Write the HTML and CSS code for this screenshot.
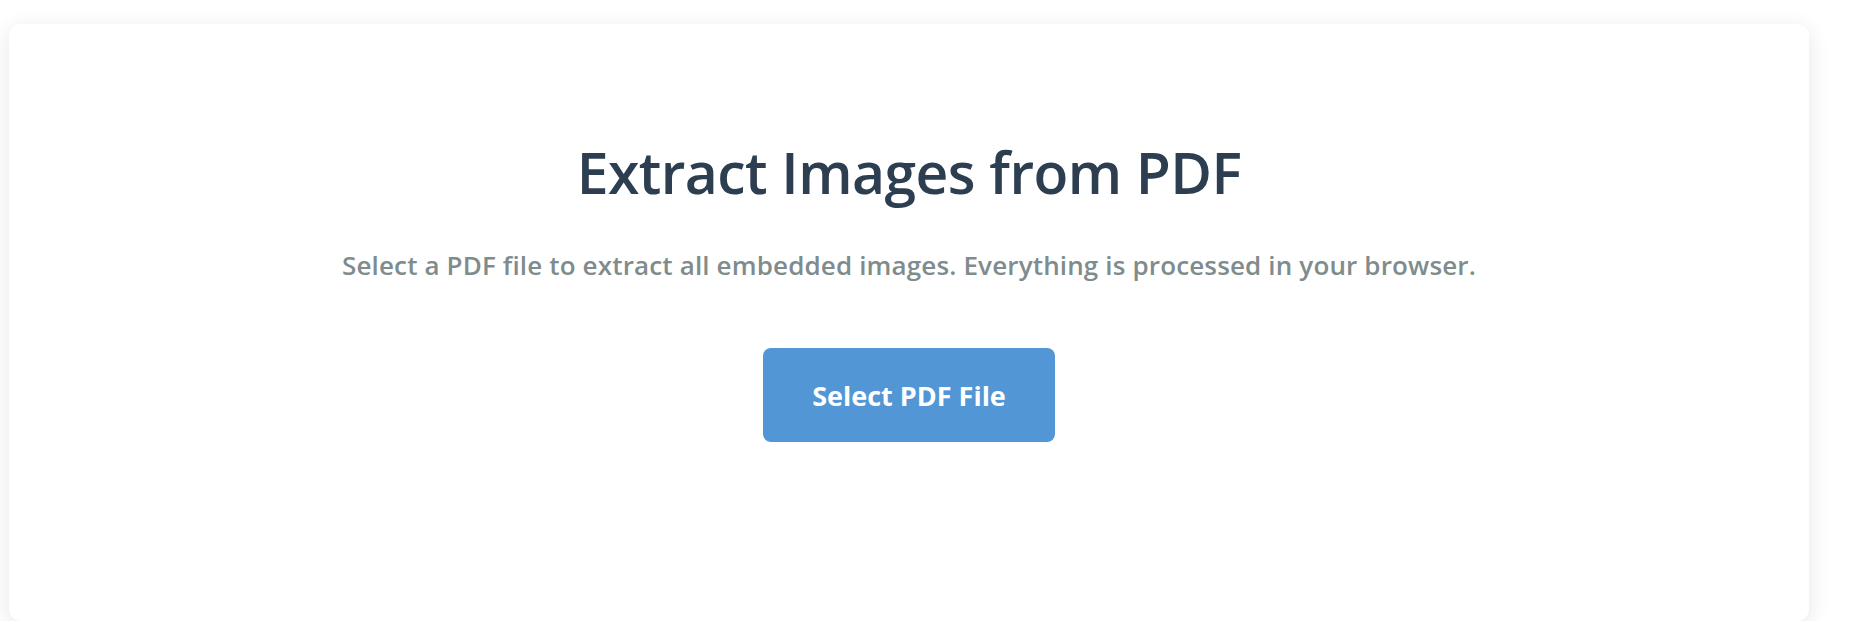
FILE: index.html
```html
<!DOCTYPE html>
<html lang="en">
<head>
<meta charset="utf-8">
<title>Extract Images from PDF</title>
<link rel="stylesheet" href="styles.css">
</head>
<body>
<main class="page">
  <section class="card">
    <h1 class="title">Extract Images from PDF</h1>
    <p class="subtitle">Select a PDF file to extract all embedded images. Everything is processed in your browser.</p>
    <button class="select-btn" type="button">Select PDF File</button>
  </section>
</main>
</body>
</html>
```

FILE: styles.css
```css
html, body {
  margin: 0;
  padding: 0;
  background: #ffffff;
}

body {
  font-family: "Open Sans", "Noto Sans", "Liberation Sans", sans-serif;
}

.page {
  padding: 24px 0 0 9px;
}

.card {
  box-sizing: border-box;
  width: 1800px;
  height: 597px;
  background: #ffffff;
  border-radius: 12px;
  box-shadow: 0 5px 22px rgba(0, 0, 0, 0.1);
  padding: 113px 40px 0;
  display: flex;
  flex-direction: column;
  align-items: center;
  text-align: center;
}

.title {
  margin: 0;
  font-size: 57px;
  line-height: 70px;
  font-weight: 600;
  letter-spacing: -0.55px;
  color: #2c3e50;
}

.subtitle {
  margin: 40px 0 0;
  font-size: 26px;
  line-height: 36px;
  font-weight: 600;
  letter-spacing: 0.15px;
  color: #7f8c8d;
}

.select-btn {
  margin-top: 65px;
  width: 292px;
  height: 94px;
  border: none;
  border-radius: 8px;
  background: #5296d5;
  color: #ffffff;
  font-family: inherit;
  font-size: 27px;
  font-weight: 700;
  cursor: pointer;
}
```
